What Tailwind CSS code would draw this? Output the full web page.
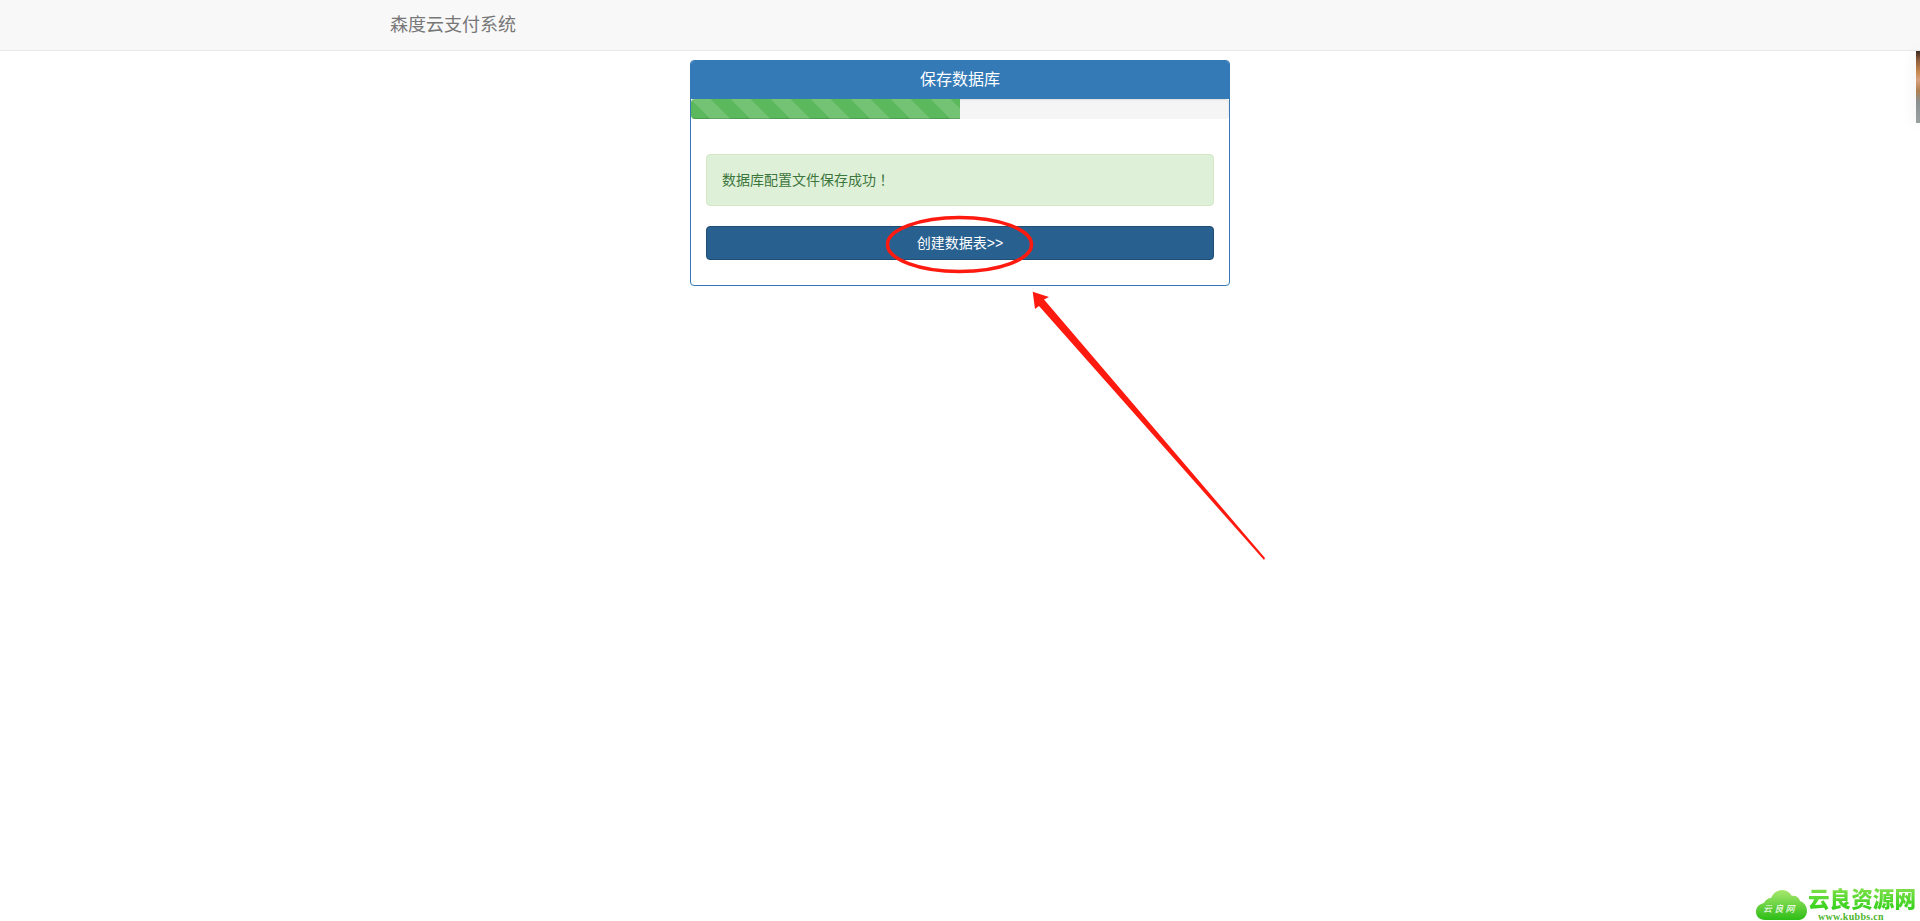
<!DOCTYPE html>
<html lang="zh-CN">
<head>
  <meta charset="UTF-8">
  <title>森度云支付系统</title>
  <script src="https://cdn.jsdelivr.net/npm/@tailwindcss/browser@4"></script>
</head>
<body class="relative h-[921px] overflow-hidden bg-white font-['Liberation_Sans','Noto_Sans_CJK_SC',sans-serif] text-sm text-[#333]">
  <!-- navbar -->
  <nav class="h-[51px] border-b border-[#e7e7e7] bg-[#f8f8f8]">
    <div class="mx-auto w-[1170px] px-[15px]">
      <a class="block text-lg leading-[50px] text-[#777]">森度云支付系统</a>
    </div>
  </nav>

  <!-- panel -->
  <div class="mx-auto mt-[9px] w-[540px] rounded border border-[#337ab7]">
    <div class="h-[38px] rounded-t-[3px] bg-[#337ab7] text-center text-base leading-[38px] text-white">保存数据库</div>
    <div class="h-5 overflow-hidden rounded bg-[#f5f5f5] shadow-[inset_0_1px_2px_rgba(0,0,0,0.1)]">
      <div class="h-full w-1/2 bg-[#5cb85c] bg-[linear-gradient(45deg,rgba(255,255,255,0.15)_25%,transparent_25%,transparent_50%,rgba(255,255,255,0.15)_50%,rgba(255,255,255,0.15)_75%,transparent_75%,transparent)] bg-size-[40px_40px] shadow-[inset_0_-1px_0_rgba(0,0,0,0.15)]"></div>
    </div>
    <div class="px-[15px] pt-[35px] pb-[25px]">
      <div class="mb-5 h-[52px] rounded border border-[#d6e9c6] bg-[#dff0d8] px-[15px] leading-[48px] text-[#3c763d]">数据库配置文件保存成功<span lang="zh-TW" class="font-['Noto_Sans_CJK_TC',sans-serif]">！</span></div>
      <button class="block h-[34px] w-full rounded border border-[#204d74] bg-[#286090] text-center text-white">创建数据表&gt;&gt;</button>
    </div>
  </div>

  <!-- red annotations -->
  <svg class="absolute top-0 left-0" width="1920" height="921" fill="none">
    <ellipse cx="959.5" cy="244.5" rx="72" ry="27" stroke="#ff1a10" stroke-width="3.5"/>
    <polygon points="1032.7,291.7 1049,297 1044,299.5 1265,558 1264,560 1039,306 1035,309" fill="#ff1a10"/>
  </svg>

  <!-- cut off thumbnail at right edge -->
  <div class="absolute top-[51px] right-0 h-[72px] w-1 bg-[linear-gradient(180deg,#3a2a20_0%,#8a5a3a_12%,#c88a50_30%,#d8a080_40%,#b08050_55%,#8a9090_70%,#9aa0a0_100%)] shadow-[0_0_14px_rgba(0,0,0,0.12)]"></div>

  <!-- watermark -->
  <div class="absolute right-0 bottom-px flex h-[30px] w-[164px] items-start">
    <svg width="52" height="30" viewBox="0 0 52 30" class="shrink-0">
      <defs>
        <linearGradient id="cloud" x1="0" y1="0" x2="0" y2="1">
          <stop offset="0" stop-color="#a8e86e"/>
          <stop offset="1" stop-color="#2dbd16"/>
        </linearGradient>
      </defs>
      <path d="M9 30C3 30 0 26 0 22C0 17 3 14 8 13C9 10 12 8 15 8C17 3 21 0 26 0C31 0 34 3 36 6C39 5 43 7 44 11C49 13 51 17 51 21C51 26 47 30 43 30Z" fill="url(#cloud)"/>
      <text x="7" y="22" fill="#fff" font-size="9" font-style="italic" letter-spacing="2.2" font-family="Noto Sans CJK SC, sans-serif">云良网</text>
    </svg>
    <div class="flex flex-col leading-none">
      <span class="-mt-0.5 mb-px bg-[linear-gradient(180deg,#7fe04a,#2fd018)] bg-clip-text text-[21.6px] leading-[23px] font-black whitespace-nowrap text-transparent">云良资源网</span>
      <span class="ml-2.5 font-['Liberation_Serif',serif] text-[10px] leading-[9px] font-bold tracking-[0.3px] text-[#4fb52f]">www.kubbs.cn</span>
    </div>
  </div>
</body>
</html>
